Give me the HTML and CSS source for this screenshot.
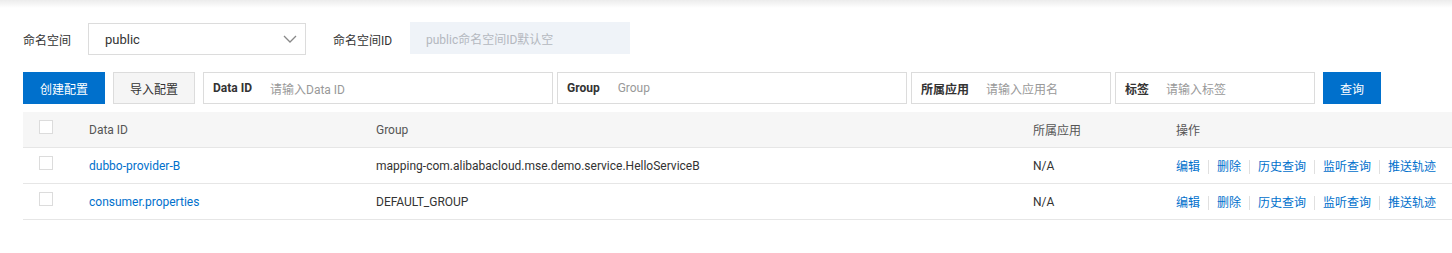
FILE: index.html
```html
<!DOCTYPE html>
<html lang="zh-CN">
  <head>
    <meta charset="UTF-8" />
    <meta name="viewport" content="width=device-width, initial-scale=1.0" />
    <title>配置列表</title>
    <link rel="stylesheet" href="styles.css">
  </head>
  <body>
    <div class="top-shadow"></div>

    <div class="page">
      <div class="filter-row">
        <span class="field-label">命名空间</span>
        <div class="select">
          <span>public</span>
          <svg class="chevron" width="14" height="8" viewBox="0 0 14 8">
            <path d="M1 1 L7 7 L13 1" fill="none" stroke="#888" stroke-width="1.3" />
          </svg>
        </div>
        <span class="field-label ns-id-label">命名空间ID</span>
        <div class="input disabled">public命名空间ID默认空</div>
      </div>

      <div class="filter-row search-row">
        <button class="btn btn-primary">创建配置</button>
        <button class="btn btn-normal">导入配置</button>
        <div class="input-group wide">
          <span class="group-label">Data ID</span>
          <span class="placeholder">请输入Data ID</span>
        </div>
        <div class="input-group wide">
          <span class="group-label">Group</span>
          <span class="placeholder">Group</span>
        </div>
        <div class="input-group narrow">
          <span class="group-label">所属应用</span>
          <span class="placeholder">请输入应用名</span>
        </div>
        <div class="input-group narrow">
          <span class="group-label">标签</span>
          <span class="placeholder">请输入标签</span>
        </div>
        <button class="btn btn-primary btn-query">查询</button>
      </div>

      <table class="config-table">
        <colgroup>
          <col class="col-check" />
          <col class="col-id" />
          <col class="col-group" />
          <col class="col-app" />
          <col />
        </colgroup>
        <thead>
          <tr>
            <th><span class="checkbox"></span></th>
            <th>Data ID</th>
            <th>Group</th>
            <th>所属应用</th>
            <th>操作</th>
          </tr>
        </thead>
        <tbody>
          <tr>
            <td><span class="checkbox"></span></td>
            <td><a href="#">dubbo-provider-B</a></td>
            <td>mapping-com.alibabacloud.mse.demo.service.HelloServiceB</td>
            <td>N/A</td>
            <td class="ops">
              <a href="#">编辑</a><span class="sep"></span><a href="#">删除</a><span class="sep"></span><a href="#">历史查询</a><span class="sep"></span><a href="#">监听查询</a><span class="sep"></span><a href="#">推送轨迹</a>
            </td>
          </tr>
          <tr>
            <td><span class="checkbox"></span></td>
            <td><a href="#">consumer.properties</a></td>
            <td>DEFAULT_GROUP</td>
            <td>N/A</td>
            <td class="ops">
              <a href="#">编辑</a><span class="sep"></span><a href="#">删除</a><span class="sep"></span><a href="#">历史查询</a><span class="sep"></span><a href="#">监听查询</a><span class="sep"></span><a href="#">推送轨迹</a>
            </td>
          </tr>
        </tbody>
      </table>
    </div>
  </body>
</html>
```

FILE: styles.css
```css
body {
  margin: 0;
  background: #fff;
  font-family: Roboto, "Noto Sans CJK SC", sans-serif;
  font-size: 12px;
  color: #333;
}
.top-shadow {
  height: 8px;
  background: linear-gradient(#ececec, #fff);
}
.page {
  padding: 15px 0 0 23px;
}
.filter-row {
  display: flex;
  align-items: center;
  height: 32px;
}
.search-row {
  margin-top: 17px;
  gap: 8px;
}
.field-label {
  width: 65px;
  color: #333;
}
.ns-id-label {
  width: 77px;
  margin-left: 27px;
}
.select {
  width: 218px;
  height: 32px;
  box-sizing: border-box;
  border: 1px solid #dcdcdc;
  display: flex;
  align-items: center;
  justify-content: space-between;
  padding: 0 8px 0 16px;
  font-size: 13px;
}
.input {
  height: 32px;
  box-sizing: border-box;
  display: flex;
  align-items: center;
}
.input.disabled {
  width: 220px;
  margin-top: -2px;
  background: #eff3f8;
  color: #b4b8bf;
  padding-left: 16px;
}
.btn {
  height: 32px;
  width: 82px;
  border: 1px solid #dcdcdc;
  font-family: inherit;
  font-size: 12px;
  padding: 0;
  cursor: pointer;
}
.btn-primary {
  background: #0070cc;
  border-color: #0070cc;
  color: #fff;
}
.btn-normal {
  background: #f5f5f5;
  color: #333;
}
.btn-query {
  width: 58px;
  margin-left: 4px;
}
.input-group {
  height: 32px;
  box-sizing: border-box;
  border: 1px solid #dcdcdc;
  display: flex;
  align-items: center;
  padding-left: 9px;
  margin-right: -4px;
}
.input-group.wide {
  width: 350px;
}
.input-group.narrow {
  width: 200px;
}
.group-label {
  font-weight: bold;
  color: #333;
  margin-right: 17px;
}
.wide .group-label {
  margin-right: 18px;
}
.placeholder {
  color: #999;
}
.config-table {
  margin-top: 8px;
  width: 100%;
  border-collapse: collapse;
  table-layout: fixed;
}
.col-check {
  width: 66px;
}
.col-id {
  width: 287px;
}
.col-group {
  width: 657px;
}
.col-app {
  width: 143px;
}
.config-table th {
  background: #f6f6f6;
  font-weight: normal;
  text-align: left;
  height: 35px;
  padding: 0;
  color: #555;
  border-bottom: 1px solid #e6e6e6;
}
.config-table td {
  height: 35px;
  padding: 0;
  border-bottom: 1px solid #e6e6e6;
  color: #333;
}
.checkbox {
  display: block;
  width: 12px;
  height: 12px;
  border: 1px solid #dcdcdc;
  background: #fff;
  margin: -6px 0 0 16px;
}
.config-table a {
  color: #0070cc;
  text-decoration: none;
}
.ops {
  white-space: nowrap;
}
.sep {
  display: inline-block;
  width: 1px;
  height: 14px;
  background: #e0e0e0;
  margin: 0 8px;
  vertical-align: middle;
}
```
